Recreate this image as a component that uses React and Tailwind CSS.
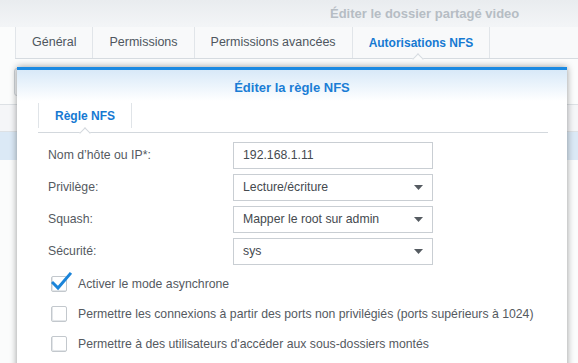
import React from "react";

function Arrow() {
  return (
    <svg width="9" height="5" viewBox="0 0 9 5" className="shrink-0">
      <path d="M0 0 L9 0 L4.5 5 Z" fill="#555b61" />
    </svg>
  );
}

function Field({ label, value, select }) {
  return (
    <div className="flex h-[27px] items-center">
      <div className="w-[185px] text-[12.25px] text-[#555a5f]">{label}</div>
      <div className="flex h-[27px] w-[200px] items-center justify-between border border-[#c9ced3] bg-white pl-[9px] pr-[9px] text-[12.25px] text-[#454a4f]">
        <span>{value}</span>
        {select && <Arrow />}
      </div>
    </div>
  );
}

function Check({ checked, label }) {
  return (
    <div className="flex h-[30px] items-center">
      <div className="relative h-[16px] w-[16px] rounded-[2px] border border-[#c3c8cd] bg-white shadow-[inset_1px_-1px_0_#e3e6e9]">
        {checked && (
          <svg width="22" height="20" viewBox="0 0 22 20" className="absolute left-[-1px] top-[-6px]">
            <path d="M2 12 L7 17 L19 3" fill="none" stroke="#1b84d9" strokeWidth="3" strokeLinecap="square" strokeLinejoin="miter" />
          </svg>
        )}
      </div>
      <span className="ml-[11px] text-[12.25px] text-[#555a5f]">{label}</span>
    </div>
  );
}

export default function App() {
  const tabs = ["Général", "Permissions", "Permissions avancées"];
  return (
    <div className="relative h-[363px] w-[578px] overflow-hidden bg-[#fbfcfc] font-['Liberation_Sans',Arial,Helvetica,sans-serif]">
      {/* window title */}
      <div className="h-[27px] bg-gradient-to-b from-[#e9ecef] to-[#f3f5f7] pl-[330px] pt-[6px] text-[13px] font-bold leading-[15px] text-[#b6bdc4]">
        Éditer le dossier partagé video
      </div>

      {/* main tabs */}
      <div className="relative ml-[15px] flex h-[32px] border-b border-[#d6dbe0] bg-[#f8f9fa]">
        {tabs.map((t, i) => (
          <div
            key={t}
            className={`flex items-center border-r border-[#e1e5e9] px-4 text-[12.5px] text-[#4e565e] ${i === 0 ? "border-l" : ""}`}
          >
            {t}
          </div>
        ))}
        <div className="flex items-center border-r border-[#e1e5e9] px-4 text-[12px] font-bold text-[#1679d2]">
          Autorisations NFS
        </div>
        <div className="absolute bottom-[-5px] left-[399px] h-[8px] w-[8px] rotate-45 border-l border-t border-[#d6dbe0] bg-[#fbfcfc]" />
      </div>

      {/* content behind dialog */}
      <div className="ml-[14px] mt-[9px] h-[28px] w-[200px] rounded-l-[3px] border border-[#cfd4d9] bg-[#f2f4f6]" />
      <div className="mt-[8px] h-[28px] border-y border-[#dde1e5] bg-[#f5f6f8]" />
      <div className="h-[28px] bg-[#dbe9f6]" />

      {/* dialog */}
      <div className="absolute left-[17px] top-[67px] h-[310px] w-[550px] bg-white shadow-[0_0_7px_rgba(0,0,0,0.4)]">
        <div className="h-[3px] bg-[#1b8ae2]" />
        <div className="flex h-[31px] items-center justify-center bg-gradient-to-b from-[#d8e9f8] to-white pt-[4px] text-[13px] font-bold text-[#1a7dd5]">
          Éditer la règle NFS
        </div>

        {/* inner tabs */}
        <div className="relative ml-[21px] mr-[19px] flex h-[32px] border-b border-[#d3d8dd]">
          <div className="mb-[4px] mt-[2px] flex items-center border-x border-[#e0e4e8] px-4 text-[12px] font-bold text-[#1679d2]">
            Règle NFS
          </div>
          <div className="absolute bottom-[-5px] left-[43px] h-[8px] w-[8px] rotate-45 border-l border-t border-[#d3d8dd] bg-white" />
        </div>

        {/* form */}
        <div className="mt-[9px] flex flex-col gap-[5px] pl-[31px]">
          <Field label="Nom d’hôte ou IP*:" value="192.168.1.11" />
          <Field label="Privilège:" value="Lecture/écriture" select />
          <Field label="Squash:" value="Mapper le root sur admin" select />
          <Field label="Sécurité:" value="sys" select />
        </div>

        <div className="mt-[4px] flex flex-col pl-[34px]">
          <Check checked label="Activer le mode asynchrone" />
          <Check label="Permettre les connexions à partir des ports non privilégiés (ports supérieurs à 1024)" />
          <Check label="Permettre à des utilisateurs d'accéder aux sous-dossiers montés" />
        </div>
      </div>
    </div>
  );
}
